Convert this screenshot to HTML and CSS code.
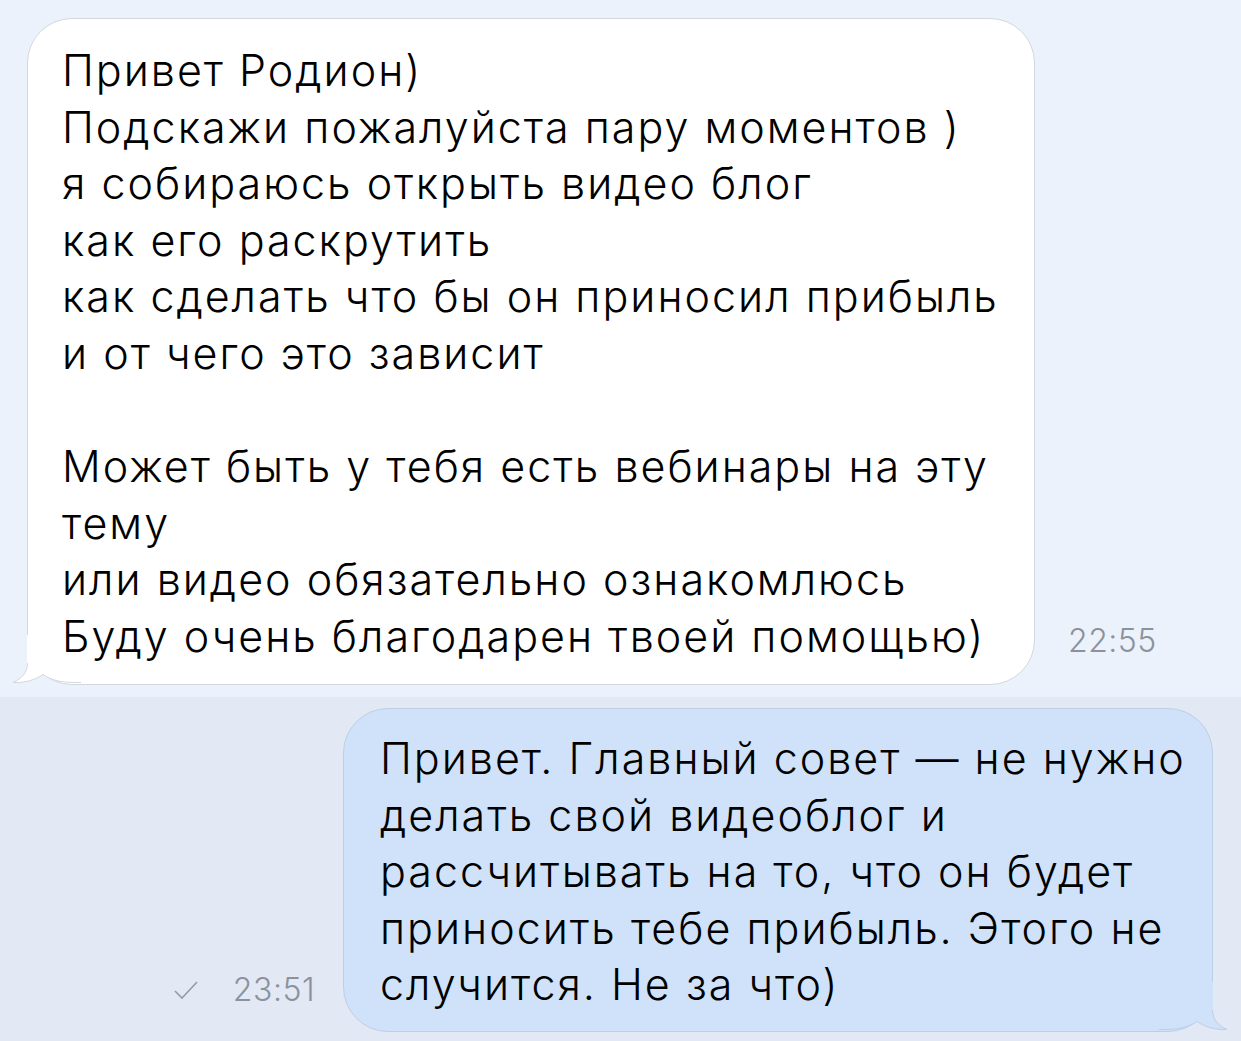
FILE: index.html
```html
<!DOCTYPE html>
<html lang="ru">
<head>
  <meta charset="UTF-8">
  <title>Чат</title>
  <link rel="stylesheet" href="styles.css">
</head>
<body>

  <div class="section">
    <div class="row incoming">
      <div class="bubble in">
        <svg class="tail tail-in" width="70" height="50" viewBox="0 0 70 50">
          <path d="M16 0 L16 28 C16 38 10 44 2 47.5 C14 48 24 45 32 39.5 C40 45 50 47.5 64 47.5 L70 47.5 L70 0 Z" fill="#fff"/>
          <path d="M16.5 28 C16.5 38 10 44 2 47.5 C14 48 24 45 32 39.5 C40 45 50 47.5 64 47.5 L70 47.5" fill="none" stroke="#d3d8de" stroke-width="1"/>
        </svg>
        <div class="text">Привет Родион)<br>Подскажи пожалуйста пару моментов )<br>я собираюсь открыть видео блог<br>как его раскрутить<br>как сделать что бы он приносил прибыль<br>и от чего это зависит<br><br>Может быть у тебя есть вебинары на эту<br>тему<br>или видео обязательно ознакомлюсь<br>Буду очень благодарен твоей помощью)</div>
      </div>
      <div class="time">22:55</div>
    </div>
  </div>

  <div class="section selected">
    <div class="row outgoing">
      <div class="status">
        <svg class="check" width="26" height="20" viewBox="0 0 26 20">
          <polyline points="2,11 9,18 24,2" fill="none" stroke="#959ca7" stroke-width="1.6"/>
        </svg>
        <span class="time">23:51</span>
      </div>
      <div class="bubble out">
        <svg class="tail tail-out" width="70" height="50" viewBox="0 0 70 50">
          <path d="M54 0 L54 28 C54 38 60 44 68 47.5 C56 48 46 45 38 39.5 C30 45 20 47.5 6 47.5 L0 47.5 L0 0 Z" fill="#cfe2f9"/>
          <path d="M53.5 28 C53.5 38 60 44 68 47.5 C56 48 46 45 38 39.5 C30 45 20 47.5 6 47.5 L0 47.5" fill="none" stroke="#bccfe6" stroke-width="1"/>
        </svg>
        <div class="text">Привет. Главный совет — не нужно<br>делать свой видеоблог и<br>рассчитывать на то, что он будет<br>приносить тебе прибыль. Этого не<br>случится. Не за что)</div>
      </div>
    </div>
  </div>

</body>
</html>
```

FILE: styles.css
```css
:root {
  --bg: #ebf2fb;
  --bg-selected: #e2e9f4;
  --in: #ffffff;
  --in-border: #d3d8de;
  --out: #cfe2f9;
  --out-border: #bccfe6;
  --time: #8b929d;
}

html, body {
  margin: 0;
  padding: 0;
  background: var(--bg);
  font-family: Inter, "Noto Sans", sans-serif;
  color: #000;
}

.section {
  background: var(--bg);
}

.section.selected {
  background: var(--bg-selected);
  height: 344px;
}

.section:first-child {
  height: 697px;
}

.row {
  display: flex;
  align-items: flex-end;
}

.row.incoming {
  padding: 18px 0 0 27px;
}

.row.outgoing {
  padding: 11px 28px 0 0;
  justify-content: flex-end;
}

.bubble {
  position: relative;
  box-sizing: border-box;
  border-radius: 45px;
}

.bubble.in {
  width: 1008px;
  background: var(--in);
  border: 1px solid var(--in-border);
  padding: 23px 0 19px 34px;
}

.bubble.out {
  width: 870px;
  background: var(--out);
  border: 1px solid var(--out-border);
  padding: 21px 0 18px 36px;
}

.text {
  position: relative;
  font-size: 43px;
  font-weight: 350;
  line-height: 56.6px;
  letter-spacing: 2px;
  white-space: nowrap;
}

.tail {
  position: absolute;
  bottom: -1px;
}

.tail-in {
  left: -17px;
}

.tail-out {
  right: -17px;
}

.time {
  font-size: 32px;
  font-weight: 300;
  line-height: 40px;
  letter-spacing: 0.5px;
  color: var(--time);
}

.incoming > .time {
  margin: 0 0 24px 33px;
}

.status {
  display: flex;
  align-items: center;
  gap: 34px;
  margin: 0 28px 22px 0;
}

.check {
  display: block;
}
```
